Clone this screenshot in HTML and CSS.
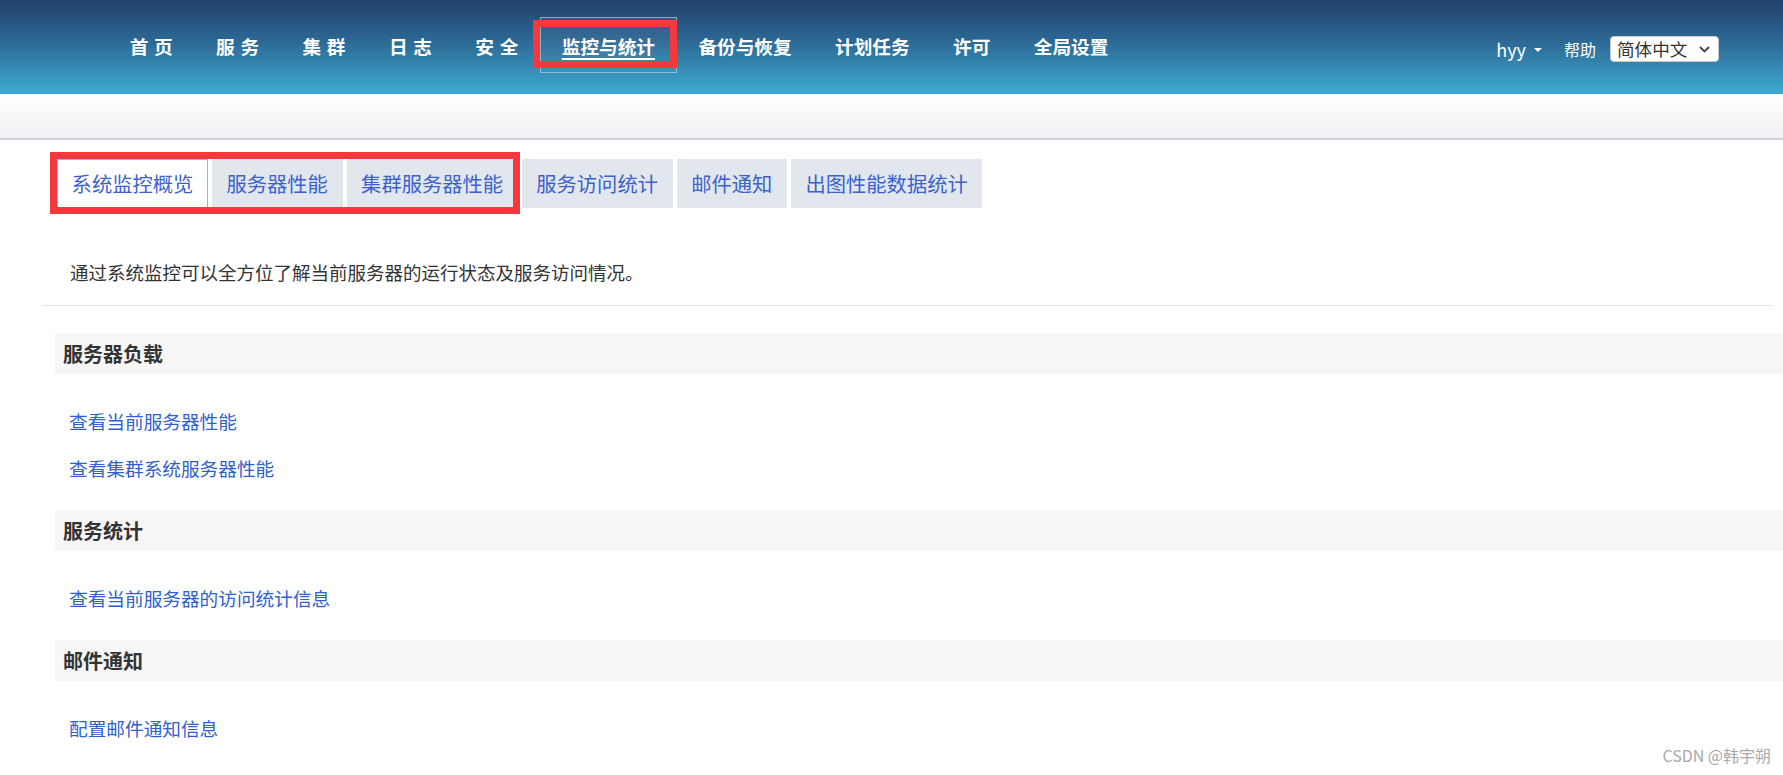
FILE: index.html
```html
<!DOCTYPE html>
<html lang="zh-CN">
<head>
<meta charset="utf-8">
<title>监控与统计</title>
<link rel="stylesheet" href="styles.css">
</head>
<body>
<header class="topbar">
  <nav class="mainnav">
    <a class="nav-item spaced">首页</a>
    <a class="nav-item spaced">服务</a>
    <a class="nav-item spaced">集群</a>
    <a class="nav-item spaced">日志</a>
    <a class="nav-item spaced">安全</a>
    <a class="nav-item active"><span class="nav-text">监控与统计</span><span class="mark mark-nav"></span></a>
    <a class="nav-item">备份与恢复</a>
    <a class="nav-item">计划任务</a>
    <a class="nav-item">许可</a>
    <a class="nav-item">全局设置</a>
  </nav>
  <div class="user-area">
    <span class="user">hyy<span class="caret"></span></span>
    <a class="help">帮助</a>
    <div class="lang">
      <span class="lang-text">简体中文</span>
      <svg class="chev" width="11" height="7" viewBox="0 0 11 7"><path d="M1 1 L5.5 5.5 L10 1" fill="none" stroke="#444" stroke-width="1.8"/></svg>
    </div>
  </div>
</header>
<div class="subbar"></div>
<main class="content">
  <div class="tabs">
    <a class="tab current">系统监控概览</a>
    <a class="tab">服务器性能</a>
    <a class="tab">集群服务器性能</a>
    <a class="tab">服务访问统计</a>
    <a class="tab">邮件通知</a>
    <a class="tab">出图性能数据统计</a>
    <span class="mark mark-tabs"></span>
  </div>
  <p class="intro">通过系统监控可以全方位了解当前服务器的运行状态及服务访问情况。</p>
  <hr class="divider">
  <section class="group">
    <h3 class="group-title">服务器负载</h3>
    <ul class="links">
      <li><a>查看当前服务器性能</a></li>
      <li><a>查看集群系统服务器性能</a></li>
    </ul>
  </section>
  <section class="group">
    <h3 class="group-title">服务统计</h3>
    <ul class="links">
      <li><a>查看当前服务器的访问统计信息</a></li>
    </ul>
  </section>
  <section class="group">
    <h3 class="group-title">邮件通知</h3>
    <ul class="links">
      <li><a>配置邮件通知信息</a></li>
    </ul>
  </section>
</main>
<div class="watermark">CSDN @韩宇朔</div>
</body>
</html>
```
FILE: styles.css
```css
html, body {
  margin: 0;
  padding: 0;
}
body {
  font-family: "Noto Sans CJK SC", "Noto Sans", sans-serif;
  color: #333;
  background: #fff;
  overflow: hidden;
  height: 775px;
  position: relative;
}
a { text-decoration: none; cursor: pointer; }

/* top bar */
.topbar {
  height: 94px;
  display: flex;
  align-items: flex-start;
  background: linear-gradient(to bottom, #22406b 0%, #2d6a96 45%, #3eabd1 100%);
}
.mainnav {
  display: flex;
  margin-top: 17px;
  padding-left: 108px;
}
.nav-item {
  position: relative;
  display: block;
  height: 50px;
  padding: 4px 20.7px 0;
  line-height: 48px;
  border: 1px solid transparent;
  color: #fff;
  font-weight: 700;
  font-size: 18.67px;
  white-space: nowrap;
}
.nav-item.spaced {
  letter-spacing: 5.7px;
  padding-right: 15px;
}
.nav-item.active {
  border-color: rgba(190, 225, 245, 0.6);
  background: rgba(255, 255, 255, 0.04);
}
.nav-text {
  text-decoration: underline;
  text-decoration-thickness: 1.5px;
  text-underline-offset: 4px;
}
.mark {
  position: absolute;
  border: 7px solid #f4393d;
  box-sizing: border-box;
  pointer-events: none;
}
.mark-nav {
  left: -8px;
  top: 2px;
  width: 144px;
  height: 48px;
}

.user-area {
  margin-left: auto;
  height: 94px;
  padding: 4px 64px 0 0;
  box-sizing: border-box;
  display: flex;
  align-items: center;
  color: #fff;
}
.user {
  font-size: 18px;
  display: flex;
  align-items: center;
}
.caret {
  width: 0;
  height: 0;
  margin-left: 8px;
  margin-top: 2px;
  border-left: 4px solid transparent;
  border-right: 4px solid transparent;
  border-top: 4px solid #fff;
}
.help {
  color: #fff;
  font-size: 16px;
  margin-left: 22px;
}
.lang {
  margin-left: 14px;
  width: 109px;
  height: 26px;
  box-sizing: border-box;
  background: #fff;
  border: 1px solid #c9c9c9;
  border-radius: 4px;
  display: flex;
  align-items: center;
  padding: 0 8px 0 6px;
  color: #333;
  font-size: 17.6px;
}
.lang-text { line-height: 24px; }
.chev { margin-left: auto; }

/* sub bar */
.subbar {
  height: 44px;
  background: linear-gradient(to bottom, #ffffff 0%, #eef0f3 100%);
  border-bottom: 2px solid #cdd2da;
}

/* tabs */
.tabs {
  position: relative;
  display: flex;
  gap: 4px;
  margin: 19px 0 0 57px;
  width: max-content;
}
.tab {
  display: block;
  height: 49px;
  box-sizing: border-box;
  line-height: 47px;
  padding: 0 13.6px;
  font-size: 20.3px;
  color: #3b62cf;
  background: #e2e7ee;
  border: 1px solid #e2e7ee;
  white-space: nowrap;
}
.tab.current {
  background: #fff;
  border-color: #93b4e6;
}
.mark-tabs {
  left: -7px;
  top: -7px;
  width: 470px;
  height: 62px;
}

.intro {
  margin: 49px 0 0 70px;
  font-size: 18.5px;
  line-height: 30px;
  color: #333;
}
.divider {
  margin: 18px 11px 0 42px;
  border: 0;
  border-top: 1px solid #e6e6e6;
  height: 0;
}
.group:first-of-type { margin-top: 27px; }
.group-title {
  margin: 0 0 0 55px;
  padding-left: 8px;
  height: 41px;
  line-height: 41px;
  background: #f6f6f6;
  font-size: 20px;
  font-weight: 700;
  color: #333;
}
.links {
  list-style: none;
  margin: 0;
  padding: 23px 0 19px 69px;
}
.links li {
  height: 47px;
  line-height: 47px;
}
.links a {
  color: #2f5fd0;
  font-size: 18.67px;
}

.watermark {
  position: absolute;
  right: 12px;
  bottom: 8px;
  font-size: 16px;
  color: #a8a8a8;
}
```
